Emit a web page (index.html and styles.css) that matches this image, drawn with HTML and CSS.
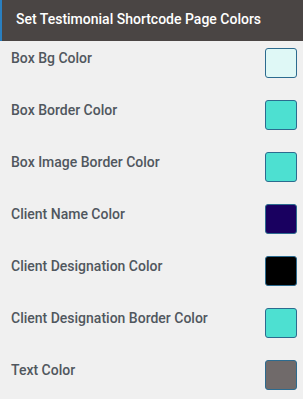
FILE: index.html
```html
<!DOCTYPE html>
<html lang="en">
<head>
    <meta charset="UTF-8" />
    <meta name="viewport" content="width=device-width, initial-scale=1.0" />
    <title>Testimonial Shortcode Page Colors</title>
    <link rel="stylesheet" href="styles.css">
</head>
<body>
    <div class="panel">
        <h2 class="panel-title">Set Testimonial Shortcode Page Colors</h2>
        <div class="color-list">
            <div class="color-row">
                <label class="color-label">Box Bg Color</label>
                <span class="swatch" style="background: #dff8f6;"></span>
            </div>
            <div class="color-row">
                <label class="color-label">Box Border Color</label>
                <span class="swatch" style="background: #4de0d1;"></span>
            </div>
            <div class="color-row">
                <label class="color-label">Box Image Border Color</label>
                <span class="swatch" style="background: #4de0d1;"></span>
            </div>
            <div class="color-row">
                <label class="color-label">Client Name Color</label>
                <span class="swatch" style="background: #190060;"></span>
            </div>
            <div class="color-row">
                <label class="color-label">Client Designation Color</label>
                <span class="swatch" style="background: #000000;"></span>
            </div>
            <div class="color-row">
                <label class="color-label">Client Designation Border Color</label>
                <span class="swatch" style="background: #4de0d1;"></span>
            </div>
            <div class="color-row">
                <label class="color-label">Text Color</label>
                <span class="swatch" style="background: #706a6a;"></span>
            </div>
        </div>
    </div>
</body>
</html>
```

FILE: styles.css
```css
body {
    margin: 0;
    background: #f0f0f0;
    font-family: Roboto, "Liberation Sans", Arial, sans-serif;
}
.panel {
    width: 303px;
}
.panel-title {
    margin: 0;
    height: 41px;
    line-height: 39px;
    padding-left: 14px;
    border-left: 2px solid #2a7fc0;
    background: #4a4544;
    color: #ffffff;
    font-size: 14px;
    font-weight: 500;
}
.color-list {
    padding-top: 7px;
}
.color-row {
    display: flex;
    justify-content: space-between;
    align-items: flex-start;
    height: 52px;
    padding: 0 6px 0 11px;
}
.color-label {
    margin-top: 0;
    line-height: 20px;
    font-size: 14px;
    font-weight: 500;
    color: #50575e;
}
.swatch {
    width: 30px;
    height: 28px;
    border: 1px solid #2c6b8f;
    border-radius: 3px;
}
```
